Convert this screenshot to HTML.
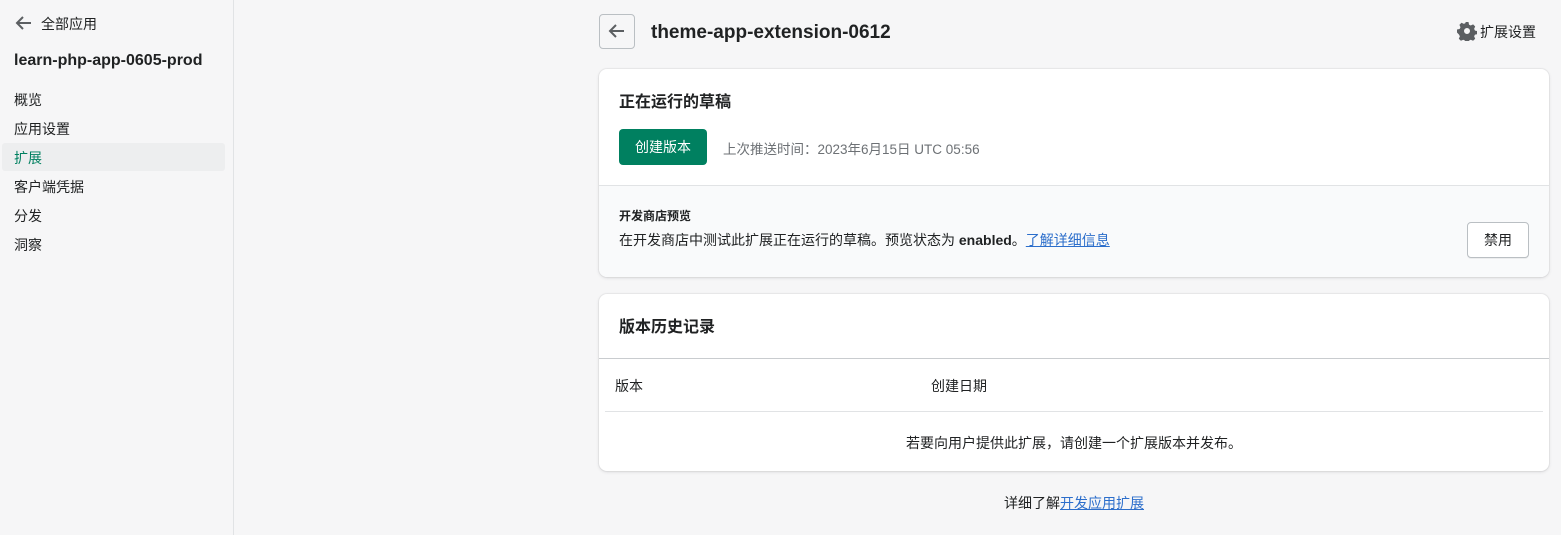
<!DOCTYPE html>
<html><head><meta charset="utf-8"><style>
*{margin:0;padding:0;box-sizing:border-box}
body{width:1561px;height:535px;background:#f6f6f7;font-family:"Liberation Sans","Noto Sans CJK SC",sans-serif;color:#202223;font-size:14px;position:relative;overflow:hidden}
.a{position:absolute;white-space:nowrap}
.side{position:absolute;left:0;top:0;width:234px;height:535px;border-right:1px solid #e1e3e5;background:#f6f6f7}
.card{position:absolute;left:599px;width:950px;background:#fff;border-radius:8px;box-shadow:0 0 0 1px rgba(63,63,68,.05),0 1px 3px rgba(63,63,68,.15);overflow:hidden}
a{color:#2c6ecb;text-decoration:underline}
</style></head><body>
<div class="side">
<svg class="a" style="left:15px;top:15px" width="18" height="16" viewBox="0 0 18 16"><path d="M16 8H3M8 2L2 8l6 6" stroke="#5c5f62" stroke-width="2" fill="none"/></svg>
<div class="a" style="left:41px;top:14px;font-size:14px">全部应用</div>
<div class="a" style="left:14px;top:52px;font-size:16px;font-weight:bold">learn-php-app-0605-prod</div>
<div class="a" style="left:14px;top:90px">概览</div>
<div class="a" style="left:14px;top:119px">应用设置</div>
<div class="a" style="left:2px;top:143px;width:223px;height:28px;background:#edeeef;border-radius:3px"></div>
<div class="a" style="left:14px;top:148px;color:#008060">扩展</div>
<div class="a" style="left:14px;top:177px">客户端凭据</div>
<div class="a" style="left:14px;top:206px">分发</div>
<div class="a" style="left:14px;top:235px">洞察</div>
</div>
<div class="a" style="left:599px;top:14px;width:36px;height:35px;border:1px solid #babfc3;border-radius:4px;background:#f6f6f7"></div>
<svg class="a" style="left:608px;top:23px" width="18" height="16" viewBox="0 0 18 16"><path d="M16 8H3M8 2L2 8l6 6" stroke="#5c5f62" stroke-width="2" fill="none"/></svg>
<div class="a" style="left:651px;top:22px;font-size:19px;font-weight:bold">theme-app-extension-0612</div>
<svg class="a" style="left:1457px;top:21px" width="20" height="20" viewBox="0 0 20 20"><path fill="#5c5f62" d="M8.5 1h3l.5 2.6 1.7.9 2.4-1.1 2.1 2.1-1.1 2.4.9 1.7 2.6.5v3l-2.6.5-.9 1.7 1.1 2.4-2.1 2.1-2.4-1.1-1.7.9-.5 2.6h-3l-.5-2.6-1.7-.9-2.4 1.1-2.1-2.1 1.1-2.4-.9-1.7L0 11.5v-3l2.6-.5.9-1.7-1.1-2.4 2.1-2.1 2.4 1.1 1.7-.9zM10 7a3 3 0 100 6 3 3 0 000-6z"/></svg>
<div class="a" style="left:1480px;top:22px">扩展设置</div>
<div class="card" style="top:69px;height:208px">
<div class="a" style="left:20px;top:22px;font-size:16px;font-weight:bold;margin-top:-3px">正在运行的草稿</div>
<div class="a" style="left:20px;top:60px;width:88px;height:36px;background:#008060;border-radius:4px;color:#fff;text-align:center;line-height:36px">创建版本</div>
<div class="a" style="left:124px;top:69px;font-size:13.5px;color:#6d7175">上次推送时间：2023年6月15日 UTC 05:56</div>
<div class="a" style="left:0;top:116px;width:950px;height:92px;background:#f9fafb;border-top:1px solid #e1e3e5"></div>
<div class="a" style="left:20px;top:138px;font-size:12px;font-weight:bold">开发商店预览</div>
<div class="a" style="left:20px;top:161px;font-size:14px">在开发商店中测试此扩展正在运行的草稿。预览状态为 <b>enabled</b>。<a>了解详细信息</a></div>
<div class="a" style="left:868px;top:153px;width:62px;height:36px;border:1px solid #babfc3;border-radius:4px;background:#fff;text-align:center;line-height:34px;box-shadow:0 1px 0 rgba(0,0,0,.05)">禁用</div>
</div>
<div class="card" style="top:294px;height:177px">
<div class="a" style="left:20px;top:19px;font-size:16px;font-weight:bold">版本历史记录</div>
<div class="a" style="left:0;top:64px;width:950px;border-top:1px solid #c9cccf"></div>
<div class="a" style="left:16px;top:82px">版本</div>
<div class="a" style="left:332px;top:82px">创建日期</div>
<div class="a" style="left:6px;top:117px;width:938px;border-top:1px solid #e1e3e5"></div>
<div class="a" style="left:0;top:139px;width:950px;text-align:center">若要向用户提供此扩展，请创建一个扩展版本并发布。</div>
</div>
<div class="a" style="left:599px;top:493px;width:950px;text-align:center">详细了解<a>开发应用扩展</a></div>
</body></html>
